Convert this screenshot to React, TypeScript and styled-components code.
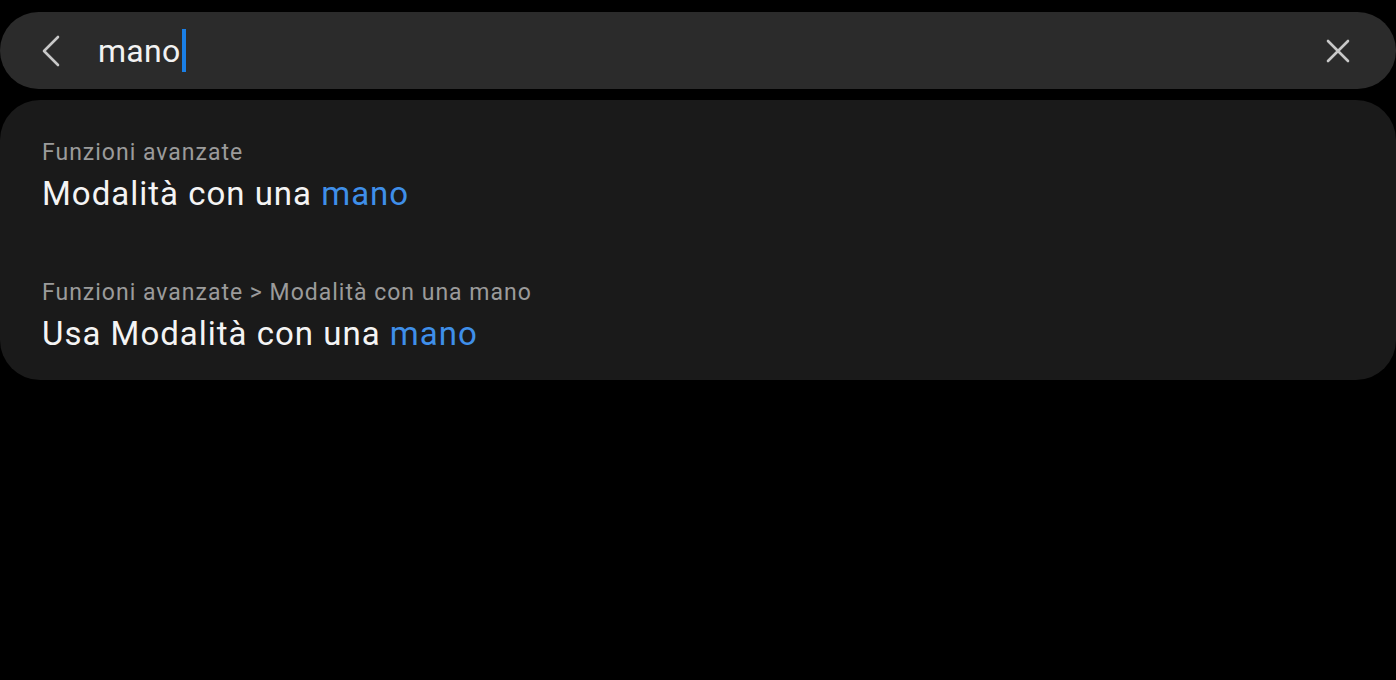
import React from 'react';
import styled, { createGlobalStyle } from 'styled-components';

// == styles =======================================================================================
const GlobalStyle = createGlobalStyle`
  html, body {
    margin: 0;
    padding: 0;
    background: #000;
  }

  body {
    font-family: Roboto, "Noto Sans", sans-serif;
    -webkit-font-smoothing: antialiased;
  }
`;

const Root = styled.div`
  display: flex;
  flex-direction: column;
  gap: 11px;
  width: 1396px;
  height: 680px;
  padding-top: 12px;
  box-sizing: border-box;
  background: #000;
`;

const SearchBar = styled.div`
  display: flex;
  align-items: center;
  height: 77px;
  padding: 0 46px 0 38px;
  border-radius: 39px;
  background: #2b2b2b;
`;

const IconButton = styled.div`
  display: flex;
  align-items: center;
  justify-content: center;
  flex: none;
  color: #c8c8c8;
`;

const Query = styled.div`
  display: flex;
  align-items: center;
  flex: 1;
  margin-left: 34px;
  font-size: 32px;
  letter-spacing: 0.3px;
  color: #f2f2f2;
`;

const Caret = styled.span`
  display: inline-block;
  width: 4px;
  height: 43px;
  margin-left: 1px;
  background: #1a7fe6;
`;

const ResultCard = styled.div`
  display: flex;
  flex-direction: column;
  border-radius: 40px;
  background: #1a1a1a;
`;

const ResultItem = styled.div`
  display: flex;
  flex-direction: column;
  height: 140px;
  padding: 40px 42px 0;
  box-sizing: border-box;
`;

const Path = styled.div`
  font-size: 23px;
  line-height: 26px;
  letter-spacing: 1px;
  color: #9b9b9b;
`;

const Title = styled.div`
  margin-top: 8px;
  font-size: 33px;
  line-height: 40px;
  letter-spacing: 1px;
  color: #f4f4f4;
`;

const Highlight = styled.span`
  color: #3f8fe9;
`;

// == element ======================================================================================
interface Result {
  path: string;
  title: string;
}

const results: Result[] = [
  { path: 'Funzioni avanzate', title: 'Modalità con una ' },
  { path: 'Funzioni avanzate > Modalità con una mano', title: 'Usa Modalità con una ' },
];

const App = (): JSX.Element => (
  <>
    <GlobalStyle />
    <Root>
      <SearchBar>
        <IconButton>
          <svg width="26" height="32" viewBox="0 0 26 32" fill="none">
            <path d="M20 2 L6 16 L20 30" stroke="currentColor" strokeWidth="2.6" strokeLinecap="round" strokeLinejoin="round" />
          </svg>
        </IconButton>
        <Query>
          mano
          <Caret />
        </Query>
        <IconButton>
          <svg width="24" height="24" viewBox="0 0 24 24" fill="none">
            <path d="M2 2 L22 22 M22 2 L2 22" stroke="currentColor" strokeWidth="2.6" strokeLinecap="round" />
          </svg>
        </IconButton>
      </SearchBar>
      <ResultCard>
        { results.map( ( result ) => (
          <ResultItem key={ result.path }>
            <Path>{ result.path }</Path>
            <Title>
              { result.title }
              <Highlight>mano</Highlight>
            </Title>
          </ResultItem>
        ) ) }
      </ResultCard>
    </Root>
  </>
);

export default App;
